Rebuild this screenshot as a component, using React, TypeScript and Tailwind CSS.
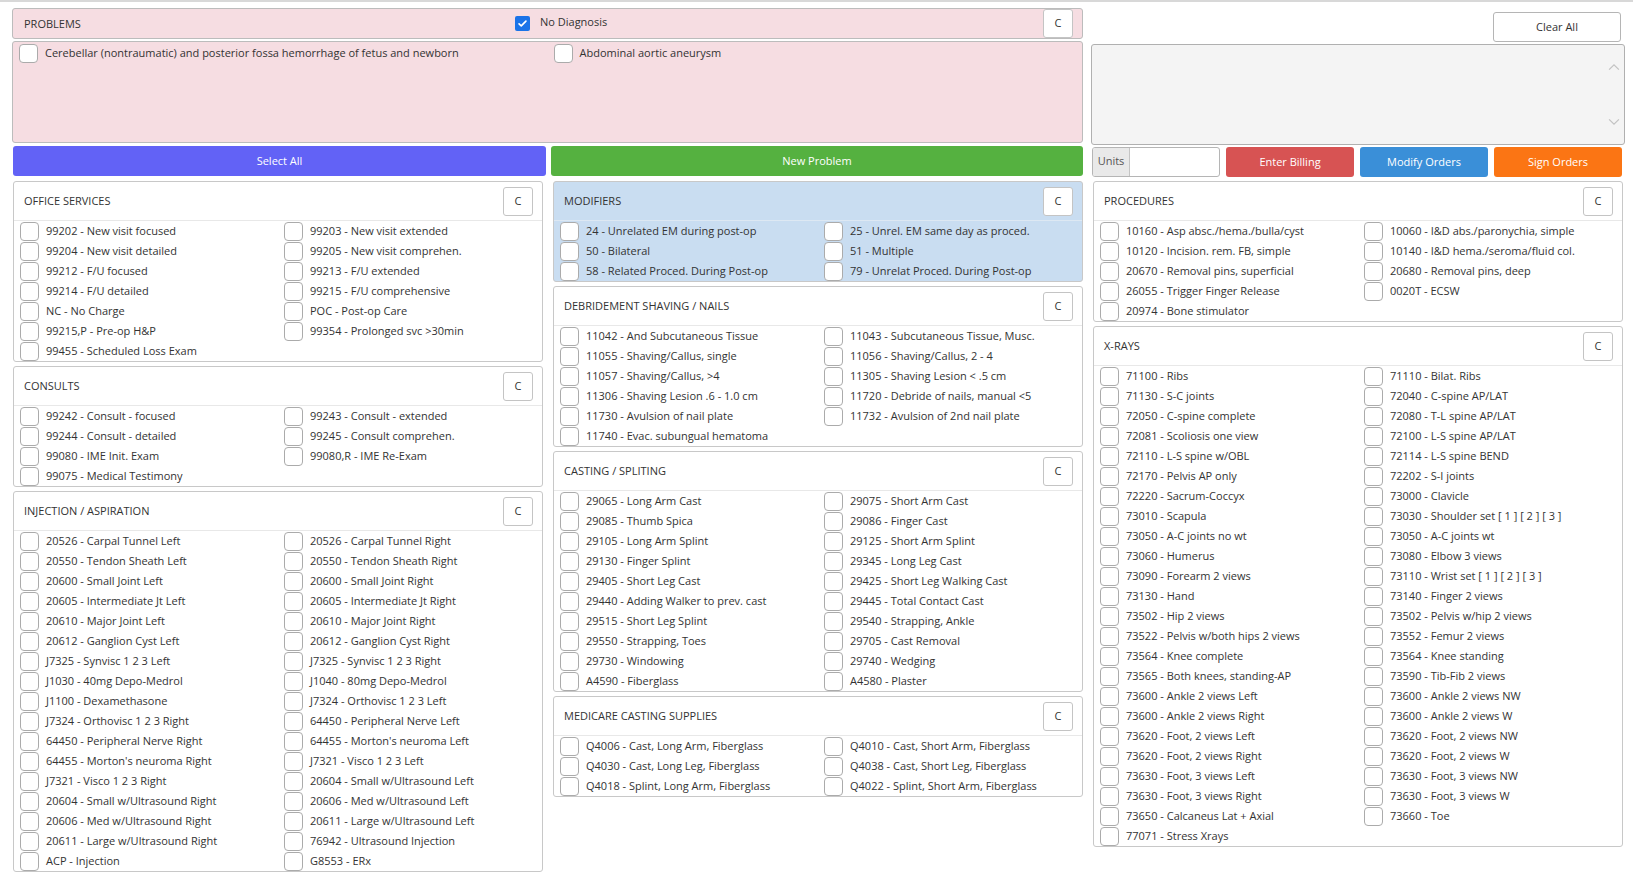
import React from 'react';

type Section = { title: string; items: string[]; tint?: boolean };

const office = [
  '99202 - New visit focused', '99203 - New visit extended',
  '99204 - New visit detailed', '99205 - New visit comprehen.',
  '99212 - F/U focused', '99213 - F/U extended',
  '99214 - F/U detailed', '99215 - F/U comprehensive',
  'NC - No Charge', 'POC - Post-op Care',
  '99215,P - Pre-op H&P', '99354 - Prolonged svc >30min',
  '99455 - Scheduled Loss Exam',
];

const consults = [
  '99242 - Consult - focused', '99243 - Consult - extended',
  '99244 - Consult - detailed', '99245 - Consult comprehen.',
  '99080 - IME Init. Exam', '99080,R - IME Re-Exam',
  '99075 - Medical Testimony',
];

const injection = [
  '20526 - Carpal Tunnel Left', '20526 - Carpal Tunnel Right',
  '20550 - Tendon Sheath Left', '20550 - Tendon Sheath Right',
  '20600 - Small Joint Left', '20600 - Small Joint Right',
  '20605 - Intermediate Jt Left', '20605 - Intermediate Jt Right',
  '20610 - Major Joint Left', '20610 - Major Joint Right',
  '20612 - Ganglion Cyst Left', '20612 - Ganglion Cyst Right',
  'J7325 - Synvisc 1 2 3 Left', 'J7325 - Synvisc 1 2 3 Right',
  'J1030 - 40mg Depo-Medrol', 'J1040 - 80mg Depo-Medrol',
  'J1100 - Dexamethasone', 'J7324 - Orthovisc 1 2 3 Left',
  'J7324 - Orthovisc 1 2 3 Right', '64450 - Peripheral Nerve Left',
  '64450 - Peripheral Nerve Right', "64455 - Morton's neuroma Left",
  "64455 - Morton's neuroma Right", 'J7321 - Visco 1 2 3 Left',
  'J7321 - Visco 1 2 3 Right', '20604 - Small w/Ultrasound Left',
  '20604 - Small w/Ultrasound Right', '20606 - Med w/Ultrasound Left',
  '20606 - Med w/Ultrasound Right', '20611 - Large w/Ultrasound Left',
  '20611 - Large w/Ultrasound Right', '76942 - Ultrasound Injection',
  'ACP - Injection', 'G8553 - ERx',
];

const modifiers = [
  '24 - Unrelated EM during post-op', '25 - Unrel. EM same day as proced.',
  '50 - Bilateral', '51 - Multiple',
  '58 - Related Proced. During Post-op', '79 - Unrelat Proced. During Post-op',
];

const debridement = [
  '11042 - And Subcutaneous Tissue', '11043 - Subcutaneous Tissue, Musc.',
  '11055 - Shaving/Callus, single', '11056 - Shaving/Callus, 2 - 4',
  '11057 - Shaving/Callus, >4', '11305 - Shaving Lesion < .5 cm',
  '11306 - Shaving Lesion .6 - 1.0 cm', '11720 - Debride of nails, manual <5',
  '11730 - Avulsion of nail plate', '11732 - Avulsion of 2nd nail plate',
  '11740 - Evac. subungual hematoma',
];

const casting = [
  '29065 - Long Arm Cast', '29075 - Short Arm Cast',
  '29085 - Thumb Spica', '29086 - Finger Cast',
  '29105 - Long Arm Splint', '29125 - Short Arm Splint',
  '29130 - Finger Splint', '29345 - Long Leg Cast',
  '29405 - Short Leg Cast', '29425 - Short Leg Walking Cast',
  '29440 - Adding Walker to prev. cast', '29445 - Total Contact Cast',
  '29515 - Short Leg Splint', '29540 - Strapping, Ankle',
  '29550 - Strapping, Toes', '29705 - Cast Removal',
  '29730 - Windowing', '29740 - Wedging',
  'A4590 - Fiberglass', 'A4580 - Plaster',
];

const medicare = [
  'Q4006 - Cast, Long Arm, Fiberglass', 'Q4010 - Cast, Short Arm, Fiberglass',
  'Q4030 - Cast, Long Leg, Fiberglass', 'Q4038 - Cast, Short Leg, Fiberglass',
  'Q4018 - Splint, Long Arm, Fiberglass', 'Q4022 - Splint, Short Arm, Fiberglass',
];

const procedures = [
  '10160 - Asp absc./hema./bulla/cyst', '10060 - I&D abs./paronychia, simple',
  '10120 - Incision. rem. FB, simple', '10140 - I&D hema./seroma/fluid col.',
  '20670 - Removal pins, superficial', '20680 - Removal pins, deep',
  '26055 - Trigger Finger Release', '0020T - ECSW',
  '20974 - Bone stimulator',
];

const xrays = [
  '71100 - Ribs', '71110 - Bilat. Ribs',
  '71130 - S-C joints', '72040 - C-spine AP/LAT',
  '72050 - C-spine complete', '72080 - T-L spine AP/LAT',
  '72081 - Scoliosis one view', '72100 - L-S spine AP/LAT',
  '72110 - L-S spine w/OBL', '72114 - L-S spine BEND',
  '72170 - Pelvis AP only', '72202 - S-I joints',
  '72220 - Sacrum-Coccyx', '73000 - Clavicle',
  '73010 - Scapula', '73030 - Shoulder set [ 1 ] [ 2 ] [ 3 ]',
  '73050 - A-C joints no wt', '73050 - A-C joints wt',
  '73060 - Humerus', '73080 - Elbow 3 views',
  '73090 - Forearm 2 views', '73110 - Wrist set [ 1 ] [ 2 ] [ 3 ]',
  '73130 - Hand', '73140 - Finger 2 views',
  '73502 - Hip 2 views', '73502 - Pelvis w/hip 2 views',
  '73522 - Pelvis w/both hips 2 views', '73552 - Femur 2 views',
  '73564 - Knee complete', '73564 - Knee standing',
  '73565 - Both knees, standing-AP', '73590 - Tib-Fib 2 views',
  '73600 - Ankle 2 views Left', '73600 - Ankle 2 views NW',
  '73600 - Ankle 2 views Right', '73600 - Ankle 2 views W',
  '73620 - Foot, 2 views Left', '73620 - Foot, 2 views NW',
  '73620 - Foot, 2 views Right', '73620 - Foot, 2 views W',
  '73630 - Foot, 3 views Left', '73630 - Foot, 3 views NW',
  '73630 - Foot, 3 views Right', '73630 - Foot, 3 views W',
  '73650 - Calcaneus Lat + Axial', '73660 - Toe',
  '77071 - Stress Xrays',
];

const columns: Section[][] = [
  [
    { title: 'Office Services', items: office },
    { title: 'Consults', items: consults },
    { title: 'Injection / Aspiration', items: injection },
  ],
  [
    { title: 'Modifiers', items: modifiers, tint: true },
    { title: 'Debridement Shaving / Nails', items: debridement },
    { title: 'Casting / Spliting', items: casting },
    { title: 'Medicare Casting Supplies', items: medicare },
  ],
  [
    { title: 'Procedures', items: procedures },
    { title: 'X-Rays', items: xrays },
  ],
];

function Box() {
  return <span className="w-[19px] h-[19px] shrink-0 rounded-[4px] border border-[#ababab] bg-white" />;
}

function CButton() {
  return (
    <button className="w-[30px] h-[29px] shrink-0 rounded-[3px] border border-[#c4c4c4] bg-white text-[11px] text-[#333]">
      C
    </button>
  );
}

function Card({ section }: { section: Section }) {
  const bg = section.tint ? 'bg-[#c9ddf1]' : 'bg-white';
  return (
    <div className={`rounded-[3px] border border-[#c8c8c8] ${bg}`}>
      <div
        className={`h-[39px] flex items-center justify-between pl-[10px] pr-[9px] border-b ${
          section.tint ? 'border-[#dde8f3]' : 'border-[#e8e8e8]'
        }`}
      >
        <span className="uppercase text-[11px] text-[#333]">{section.title}</span>
        <CButton />
      </div>
      <div className="grid grid-cols-2">
        {section.items.map((label, i) => (
          <label key={i} className="h-[20px] flex items-center pl-[6px] min-w-0">
            <Box />
            <span className="ml-[7px] text-[11px] text-[#333] whitespace-nowrap">{label}</span>
          </label>
        ))}
      </div>
    </div>
  );
}

export default function App() {
  return (
    <div className="min-h-screen bg-white text-[#333] font-['Open_Sans',sans-serif]">
      <div className="h-[2px] bg-[#d8d8d8]" />
      <div className="flex pl-[12px] gap-[8px]">
        <div className="w-[1071px]">
          <div className="mt-[6px] h-[31px] flex items-center pl-[11px] pr-[9px] rounded-[3px] border border-[#bcbcbc] bg-[#f6dde2]">
            <span className="w-[491px] mt-[2px] text-[11px] text-[#333]">PROBLEMS</span>
            <span className="w-[15px] h-[15px] rounded-[2px] bg-[#1a73e8] flex items-center justify-center">
              <svg viewBox="0 0 16 16" className="w-[11px] h-[11px]" fill="none" stroke="white" strokeWidth="2.4" strokeLinecap="round" strokeLinejoin="round">
                <path d="M3 8.5l3.2 3L13 4.5" />
              </svg>
            </span>
            <span className="ml-[10px] -mt-[3px] text-[11px] text-[#333]">No Diagnosis</span>
            <span className="flex-1" />
            <CButton />
          </div>
          <div className="mt-[2px] h-[102px] pt-px rounded-[3px] border border-[#bcbcbc] bg-[#f6dde2] grid grid-cols-2 content-start">
            <label className="h-[21px] flex items-center pl-[6px]">
              <Box />
              <span className="ml-[7px] text-[11px]">Cerebellar (nontraumatic) and posterior fossa hemorrhage of fetus and newborn</span>
            </label>
            <label className="h-[21px] flex items-center pl-[6px]">
              <Box />
              <span className="ml-[7px] text-[11px]">Abdominal aortic aneurysm</span>
            </label>
          </div>
          <div className="mt-[3px] flex gap-[5px] pl-px">
            <button className="w-[533px] h-[30px] rounded-[3px] bg-[#6262f6] text-white text-[11px]">Select All</button>
            <button className="flex-1 h-[30px] rounded-[3px] bg-[#55b140] text-white text-[11px]">New Problem</button>
          </div>
        </div>
        <div className="w-[534px]">
          <div className="mt-[10px] flex justify-end pr-[4px]">
            <button className="w-[128px] h-[30px] rounded-[3px] border border-[#b5b5b5] bg-white text-[11px] text-[#333]">Clear All</button>
          </div>
          <div className="mt-[2px] h-[101px] rounded-[3px] border border-[#b0b0b0] bg-[#f4f4f4] flex justify-end pr-[2px]">
            <div className="w-[16px] flex flex-col justify-between py-[18px] items-center">
              <svg viewBox="0 0 16 10" className="w-[12px] h-[8px]" fill="none" stroke="#c2c2c2" strokeWidth="1.6">
                <path d="M1.5 8.5L8 2l6.5 6.5" />
              </svg>
              <svg viewBox="0 0 16 10" className="w-[12px] h-[8px]" fill="none" stroke="#c2c2c2" strokeWidth="1.6">
                <path d="M1.5 1.5L8 8l6.5-6.5" />
              </svg>
            </div>
          </div>
          <div className="mt-[2px] flex gap-[6px] pl-px">
            <div className="w-[128px] h-[30px] flex rounded-[3px] border border-[#b5b5b5] bg-white overflow-hidden">
              <span className="w-[37px] bg-[#e9e9e9] border-r border-[#c4c4c4] text-[11px] text-[#555] flex items-center justify-center -mt-[1px]">Units</span>
              <span className="flex-1" />
            </div>
            <button className="w-[128px] h-[30px] rounded-[3px] bg-[#d75353] text-white text-[11px]">Enter Billing</button>
            <button className="w-[128px] h-[30px] rounded-[3px] bg-[#3a8fd8] text-white text-[11px]">Modify Orders</button>
            <button className="w-[128px] h-[30px] rounded-[3px] bg-[#fb7514] text-white text-[11px]">Sign Orders</button>
          </div>
        </div>
      </div>
      <div className="flex gap-[10px] pl-[13px] mt-[4px] items-start">
        {columns.map((col, ci) => (
          <div key={ci} className="w-[530px] flex flex-col gap-[4px]">
            {col.map((s) => (
              <Card key={s.title} section={s} />
            ))}
          </div>
        ))}
      </div>
    </div>
  );
}
